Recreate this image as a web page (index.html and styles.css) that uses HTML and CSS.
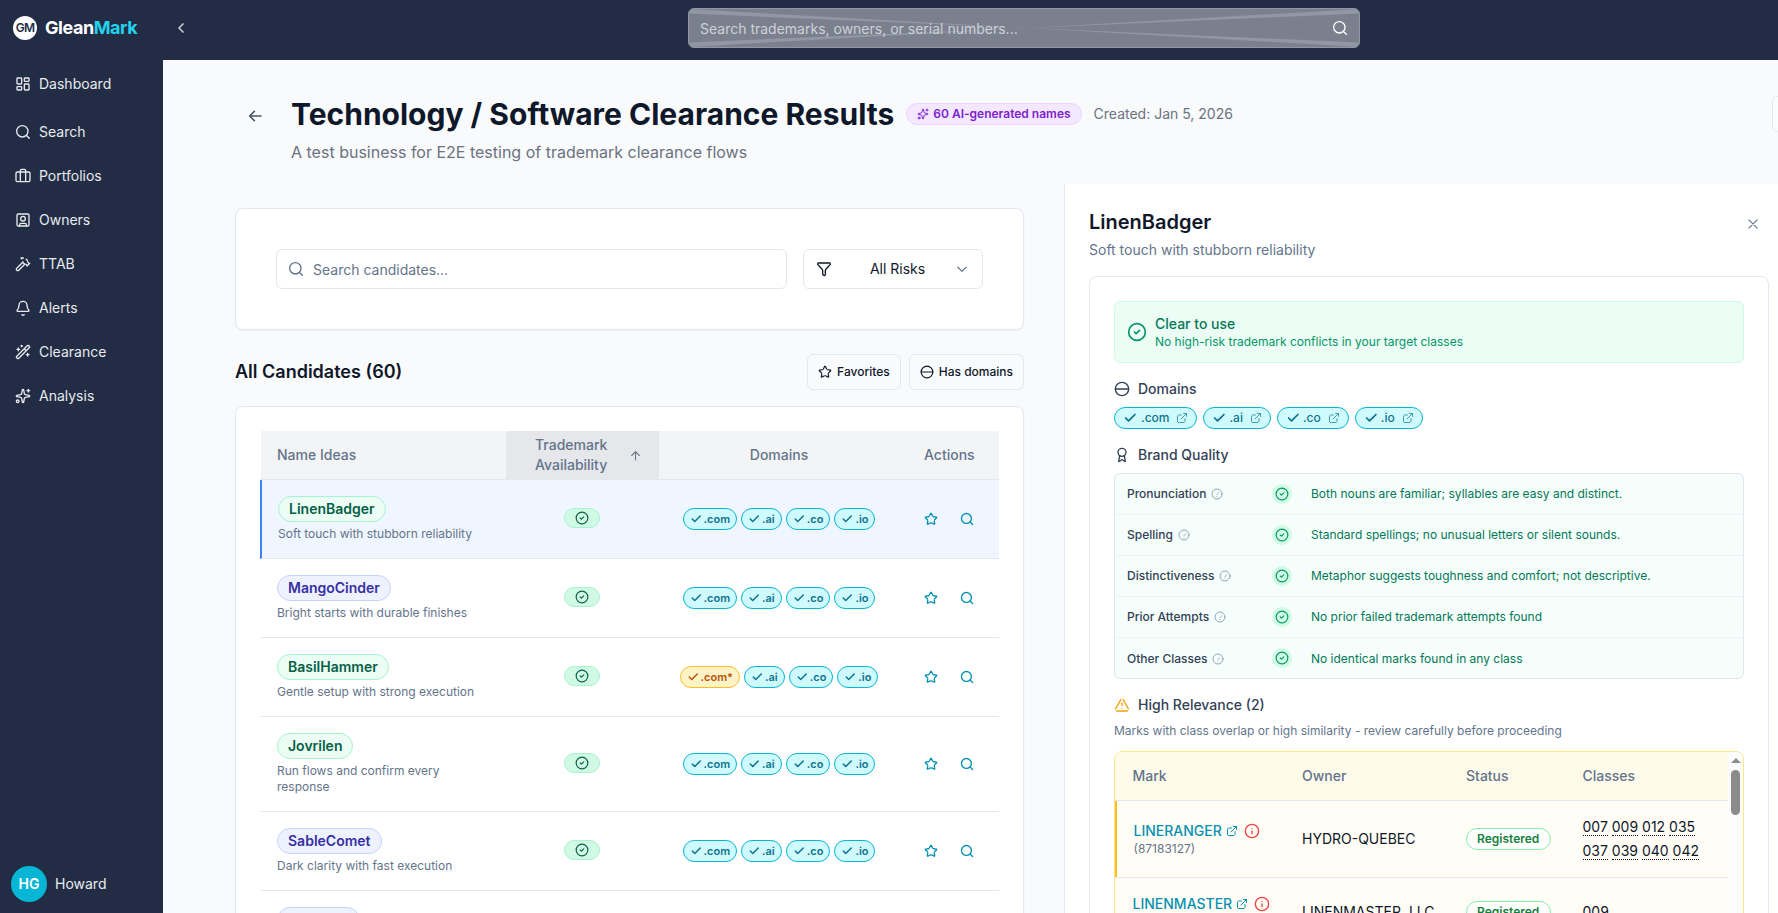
FILE: index.html
```html
<!DOCTYPE html>
<html lang="en">
<head>
<meta charset="utf-8">
<title>GleanMark - Clearance Results</title>
<link rel="stylesheet" href="styles.css">
</head>
<body>
<svg class="sprite" aria-hidden="true">
  <symbol id="check" viewBox="0 0 24 24"><path d="M20.500 6 9.500 17l-5-5"/></symbol>
  <symbol id="circle-check" viewBox="0 0 24 24"><circle cx="12" cy="12" r="10"/><path d="m9 12 2 2 4-4"/></symbol>
  <symbol id="search" viewBox="0 0 24 24"><circle cx="11" cy="11" r="8.5"/><path d="m21.5 21.5-4.3-4.3"/></symbol>
  <symbol id="star" viewBox="0 0 24 24"><path d="M11.525 2.295m.95 0l2.31 4.679m1.595 1.16l5.166.756m.294.904l-3.736 3.638m-.611 1.878l.882 5.14m-.771.56l-4.618-2.428m-1.973 0L6.396 21.01m-.77-.56l.881-5.139m-.611-1.879L2.16 9.795m.294-.906l5.165-.755m1.597-1.16l2.309-4.679"/></symbol>
  <symbol id="globe" viewBox="0 0 24 24"><circle cx="12" cy="12" r="10"/><path d="M2 12h20"/></symbol>
  <symbol id="help" viewBox="0 0 24 24"><circle cx="12" cy="12" r="10"/><path d="M14.92 10c0 2-3 3-3 3M12 17h.01"/></symbol>
  <symbol id="info" viewBox="0 0 24 24"><circle cx="12" cy="12" r="10"/><path d="M12 16v-4M12 8h.01"/></symbol>
  <symbol id="external" viewBox="0 0 24 24"><path d="M15 3h6v6M10 14 21 3M18 13v6M16 21H5M3 19V8M5 6h6"/></symbol>
  <symbol id="funnel" viewBox="0 0 24 24"><path d="M10.553 20.895l2 1M14 21v-7M14.517 12.659 21.74 4.67M21 3H3M2.258 4.67l7.225 7.989M10 14v6"/></symbol>
  <symbol id="sparkles" viewBox="0 0 24 24"><path d="M11.017 2.814a1 1 0 0 1 1.966 0l1.051 5.558a2 2 0 0 0 1.594 1.594l5.558 1.051a1 1 0 0 1 0 1.966l-5.558 1.051a2 2 0 0 0-1.594 1.594l-1.051 5.558a1 1 0 0 1-1.966 0l-1.051-5.558a2 2 0 0 0-1.594-1.594l-5.558-1.051a1 1 0 0 1 0-1.966l5.558-1.051a2 2 0 0 0 1.594-1.594zM20 2v4M22 4h-4"/><circle cx="4" cy="20" r="2"/></symbol>
  <symbol id="chevron-down" viewBox="0 0 24 24"><path d="m5 9 7 7 7-7"/></symbol>
</svg>

<header class="topbar">
  <div class="brand">
    <span class="brand-mark">GM</span>
    <span class="brand-name">Glean<b>Mark</b></span>
  </div>
  <svg class="icon collapse" viewBox="0 0 24 24"><path d="m15 18-6-6 6-6"/></svg>
  <div class="global-search">
    <svg class="global-search-bg" viewBox="0 0 672 40" preserveAspectRatio="none"><path d="M0 1 340 20 0 39V34.5L340 20 0 5.500zM672 1 340 20 672 39V34.500L340 20 672 5.500z"/></svg>
    <span>Search trademarks, owners, or serial numbers...</span>
    <svg class="icon"><use href="#search"/></svg>
  </div>
</header>

<div class="shell">
  <nav class="sidebar">
    <a class="nav-item first"><svg class="icon" viewBox="0 0 24 24"><rect x="3" y="3" width="7" height="9" rx="1"/><rect x="14" y="3" width="7" height="5" rx="1"/><rect x="14" y="12" width="7" height="9" rx="1"/><rect x="3" y="16" width="7" height="5" rx="1"/></svg>Dashboard</a>
    <a class="nav-item"><svg class="icon"><use href="#search"/></svg>Search</a>
    <a class="nav-item"><svg class="icon" viewBox="0 0 24 24"><path d="M16 20V4a2 2 0 0 0-2-2h-4a2 2 0 0 0-2 2v16"/><rect x="1.500" y="6" width="21" height="14.500" rx="2"/></svg>Portfolios</a>
    <a class="nav-item"><svg class="icon" viewBox="0 0 24 24"><rect x="3" y="3" width="18" height="18" rx="2"/><circle cx="12" cy="10" r="3.500"/><path d="M7 21v-2a2 2 0 0 1 2-2h6a2 2 0 0 1 2 2v2"/></svg>Owners</a>
    <a class="nav-item"><svg class="icon" viewBox="0 0 24 24"><path d="m15 12-9.373 9.373a1 1 0 0 1-3.001-3L12 9M18 15l4-4M21.500 11.500l-1.914-1.914M19 8.172v-.344M18.414 6.414l-1.657-1.657M12.516 3H9l1.243 1.243M12 8.485V10l2 2h1.172M16.586 12.586 18.500 14.500"/></svg>TTAB</a>
    <a class="nav-item"><svg class="icon" viewBox="0 0 24 24"><path d="M10.268 22a2 2 0 0 0 3.464 0M3.262 15.326A1 1 0 0 0 4 17h16a1 1 0 0 0 .74-1.673C19.410 13.956 18 12.499 18 8A6 6 0 0 0 6 8c0 4.499-1.411 5.956-2.738 7.326"/></svg>Alerts</a>
    <a class="nav-item"><svg class="icon" viewBox="0 0 24 24"><path d="m21.640 3.640-1.280-1.280a1.210 1.210 0 0 0-1.720 0L2.360 18.640a1.210 1.210 0 0 0 0 1.720l1.280 1.280a1.200 1.200 0 0 0 1.720 0L21.640 5.360a1.200 1.200 0 0 0 0-1.720M14 7l3 3M5 6v4M19 14v4M10 2v2M7 8H3M21 16h-4M11 3H9"/></svg>Clearance</a>
    <a class="nav-item"><svg class="icon"><use href="#sparkles"/></svg>Analysis</a>
    <div class="user"><span class="avatar">HG</span>Howard</div>
  </nav>

  <main class="main">
    <div class="page-head">
      <svg class="icon back" viewBox="0 0 24 24"><path d="m11 19-7-7 7-7M21 12H4"/></svg>
      <div class="page-titles">
        <div class="title-row">
          <h1>Technology / Software Clearance Results</h1>
          <span class="ai-badge"><svg class="icon"><use href="#sparkles"/></svg>60 AI-generated names</span>
          <span class="created">Created: Jan 5, 2026</span>
        </div>
        <p>A test business for E2E testing of trademark clearance flows</p>
      </div>
      <span class="edge-button"></span>
    </div>

    <div class="columns">
      <section class="list-col">
        <div class="card filters">
          <div class="field"><svg class="icon"><use href="#search"/></svg><span>Search candidates...</span></div>
          <div class="select"><svg class="icon"><use href="#funnel"/></svg><span>All Risks</span><svg class="icon chev"><use href="#chevron-down"/></svg></div>
        </div>
        <div class="list-head">
          <h2>All Candidates (60)</h2>
          <span class="btn"><svg class="icon"><use href="#star"/></svg>Favorites</span>
          <span class="btn"><svg class="icon"><use href="#globe"/></svg>Has domains</span>
        </div>
        <div class="card table-card">
          <div class="row thead">
            <div>Name Ideas</div>
            <div class="sorted"><span>Trademark<br>Availability</span><svg class="icon" viewBox="0 0 24 24"><path d="m5 12 7-7 7 7M12 20V5"/></svg></div>
            <div class="center">Domains</div>
            <div class="act-head">Actions</div>
          </div>
          <div class="row selected">
            <div class="idea"><span class="name green">LinenBadger</span><p>Soft touch with stubborn reliability</p></div>
            <div class="center"><span class="ok"><svg class="icon"><use href="#circle-check"/></svg></span></div>
            <div class="doms"><span class="dom"><svg class="icon"><use href="#check"/></svg>.com</span><span class="dom"><svg class="icon"><use href="#check"/></svg>.ai</span><span class="dom"><svg class="icon"><use href="#check"/></svg>.co</span><span class="dom"><svg class="icon"><use href="#check"/></svg>.io</span></div>
            <div class="acts"><svg class="icon"><use href="#star"/></svg><svg class="icon"><use href="#search"/></svg></div>
          </div>
          <div class="row">
            <div class="idea"><span class="name indigo">MangoCinder</span><p>Bright starts with durable finishes</p></div>
            <div class="center"><span class="ok"><svg class="icon"><use href="#circle-check"/></svg></span></div>
            <div class="doms"><span class="dom"><svg class="icon"><use href="#check"/></svg>.com</span><span class="dom"><svg class="icon"><use href="#check"/></svg>.ai</span><span class="dom"><svg class="icon"><use href="#check"/></svg>.co</span><span class="dom"><svg class="icon"><use href="#check"/></svg>.io</span></div>
            <div class="acts"><svg class="icon"><use href="#star"/></svg><svg class="icon"><use href="#search"/></svg></div>
          </div>
          <div class="row">
            <div class="idea"><span class="name green">BasilHammer</span><p>Gentle setup with strong execution</p></div>
            <div class="center"><span class="ok"><svg class="icon"><use href="#circle-check"/></svg></span></div>
            <div class="doms"><span class="dom amber"><svg class="icon"><use href="#check"/></svg>.com*</span><span class="dom"><svg class="icon"><use href="#check"/></svg>.ai</span><span class="dom"><svg class="icon"><use href="#check"/></svg>.co</span><span class="dom"><svg class="icon"><use href="#check"/></svg>.io</span></div>
            <div class="acts"><svg class="icon"><use href="#star"/></svg><svg class="icon"><use href="#search"/></svg></div>
          </div>
          <div class="row">
            <div class="idea"><span class="name green">Jovrilen</span><p>Run flows and confirm every response</p></div>
            <div class="center"><span class="ok"><svg class="icon"><use href="#circle-check"/></svg></span></div>
            <div class="doms"><span class="dom"><svg class="icon"><use href="#check"/></svg>.com</span><span class="dom"><svg class="icon"><use href="#check"/></svg>.ai</span><span class="dom"><svg class="icon"><use href="#check"/></svg>.co</span><span class="dom"><svg class="icon"><use href="#check"/></svg>.io</span></div>
            <div class="acts"><svg class="icon"><use href="#star"/></svg><svg class="icon"><use href="#search"/></svg></div>
          </div>
          <div class="row">
            <div class="idea"><span class="name indigo">SableComet</span><p>Dark clarity with fast execution</p></div>
            <div class="center"><span class="ok"><svg class="icon"><use href="#circle-check"/></svg></span></div>
            <div class="doms"><span class="dom"><svg class="icon"><use href="#check"/></svg>.com</span><span class="dom"><svg class="icon"><use href="#check"/></svg>.ai</span><span class="dom"><svg class="icon"><use href="#check"/></svg>.co</span><span class="dom"><svg class="icon"><use href="#check"/></svg>.io</span></div>
            <div class="acts"><svg class="icon"><use href="#star"/></svg><svg class="icon"><use href="#search"/></svg></div>
          </div>
          <div class="row">
            <div class="idea"><span class="name indigo blank"></span></div>
          </div>
        </div>
      </section>

      <aside class="detail">
        <div class="detail-head">
          <div><h3>LinenBadger</h3><p>Soft touch with stubborn reliability</p></div>
          <svg class="icon" viewBox="0 0 24 24"><path d="M19 5 5 19M5 5l14 14"/></svg>
        </div>
        <div class="detail-card">
          <div class="clear-box">
            <svg class="icon"><use href="#circle-check"/></svg>
            <div><strong>Clear to use</strong><p>No high-risk trademark conflicts in your target classes</p></div>
          </div>
          <h4><svg class="icon"><use href="#globe"/></svg>Domains</h4>
          <div class="links">
            <span class="link"><svg class="icon"><use href="#check"/></svg>.com<svg class="icon ext"><use href="#external"/></svg></span>
            <span class="link"><svg class="icon"><use href="#check"/></svg>.ai<svg class="icon ext"><use href="#external"/></svg></span>
            <span class="link"><svg class="icon"><use href="#check"/></svg>.co<svg class="icon ext"><use href="#external"/></svg></span>
            <span class="link"><svg class="icon"><use href="#check"/></svg>.io<svg class="icon ext"><use href="#external"/></svg></span>
          </div>
          <h4><svg class="icon" viewBox="0 0 24 24"><circle cx="12" cy="8" r="6"/><path d="m15.477 12.890 1.515 8.526m-.810.470l-3.580-2.687m-1.197 0l-3.586 2.686m-.810-.469l1.514-8.526"/></svg>Brand Quality</h4>
          <div class="quality">
            <div class="q-row"><span class="q-label">Pronunciation<svg class="icon"><use href="#help"/></svg></span><span class="disc"><svg class="icon"><use href="#circle-check"/></svg></span><span>Both nouns are familiar; syllables are easy and distinct.</span></div>
            <div class="q-row"><span class="q-label">Spelling<svg class="icon"><use href="#help"/></svg></span><span class="disc"><svg class="icon"><use href="#circle-check"/></svg></span><span>Standard spellings; no unusual letters or silent sounds.</span></div>
            <div class="q-row"><span class="q-label">Distinctiveness<svg class="icon"><use href="#help"/></svg></span><span class="disc"><svg class="icon"><use href="#circle-check"/></svg></span><span>Metaphor suggests toughness and comfort; not descriptive.</span></div>
            <div class="q-row"><span class="q-label">Prior Attempts<svg class="icon"><use href="#help"/></svg></span><span class="disc"><svg class="icon"><use href="#circle-check"/></svg></span><span>No prior failed trademark attempts found</span></div>
            <div class="q-row"><span class="q-label">Other Classes<svg class="icon"><use href="#help"/></svg></span><span class="disc"><svg class="icon"><use href="#circle-check"/></svg></span><span>No identical marks found in any class</span></div>
          </div>
          <h4 class="warn"><svg class="icon" viewBox="0 0 24 24"><path d="M21.730 18l-8-14M10.250 4l-8 14M4 21h16M12 9v4M12 17h.01"/></svg>High Relevance (2)</h4>
          <p class="note">Marks with class overlap or high similarity - review carefully before proceeding</p>
          <div class="marks">
            <div class="marks-body">
              <div class="m-row m-head"><span>Mark</span><span>Owner</span><span>Status</span><span>Classes</span></div>
              <div class="m-row m-first">
                <div><span class="mark-name">LINERANGER<svg class="icon"><use href="#external"/></svg><svg class="icon alert"><use href="#info"/></svg></span><p>(87183127)</p></div>
                <span>HYDRO-QUEBEC</span>
                <span><em class="reg">Registered</em></span>
                <span class="classes"><u>007</u> <u>009</u> <u>012</u> <u>035</u> <u>037</u> <u>039</u> <u>040</u> <u>042</u></span>
              </div>
              <div class="m-row m-second">
                <div><span class="mark-name">LINENMASTER<svg class="icon"><use href="#external"/></svg><svg class="icon alert"><use href="#info"/></svg></span></div>
                <span>LINENMASTER, LLC</span>
                <span><em class="reg">Registered</em></span>
                <span class="classes"><u>009</u></span>
              </div>
            </div>
            <div class="scroll"><i class="scroll-up"></i><i class="scroll-thumb"></i></div>
          </div>
        </div>
      </aside>
    </div>
  </main>
</div>
</body>
</html>
```
FILE: styles.css
```css
* { box-sizing: border-box; }
html, body { margin: 0; height: 100%; overflow: hidden; }
body { font-family: Inter, "Liberation Sans", sans-serif; font-size: 14px; line-height: 20px; color: #0f172a; background: #f9fafc; }
h1, h2, h3, h4, p { margin: 0; }
.sprite { position: absolute; width: 0; height: 0; }
.icon { width: 16px; height: 16px; flex: none; display: block; fill: none; stroke: currentColor; stroke-width: 2; stroke-linecap: round; stroke-linejoin: round; overflow: visible; }

/* Top bar */
.topbar { height: 60px; background: #222d45; display: flex; align-items: flex-start; }
.brand { width: 163px; padding: 16px 0 0 13px; display: flex; align-items: center; gap: 8px; }
.brand-mark { width: 24px; height: 24px; border-radius: 50%; background: #fff; color: #222d45; font-size: 12px; font-weight: 600; letter-spacing: -0.7px; display: flex; align-items: center; justify-content: center; }
.brand-name { font-size: 18px; line-height: 24px; font-weight: 700; letter-spacing: -0.45px; color: #fff; }
.brand-name b { color: #22d3ee; font-weight: 700; }
.collapse { color: #c3c8d1; margin: 20px 0 0 10px; stroke-width: 2.600; }
.global-search { position: relative; width: 672px; height: 40px; margin: 8px 0 0 499px; border: 1px solid #9297a5; border-radius: 6px; background: #7b808e; color: #cdd1d9; display: flex; align-items: center; justify-content: space-between; padding: 0 11px; overflow: hidden; }
.global-search-bg { position: absolute; inset: -1px; width: 672px; height: 40px; fill: #9297a5; }
.global-search span, .global-search .icon { position: relative; }
.global-search span { padding-top: 1px; }
.global-search .icon { color: #fff; }

/* Navigation */
.shell { display: flex; height: 853px; }
.sidebar { width: 163px; flex: none; background: #222d45; color: #e8eaee; display: flex; flex-direction: column; padding-top: 6px; }
.nav-item { height: 44px; padding-left: 15px; display: flex; align-items: center; gap: 8px; }
.nav-item.first { height: 36px; margin-bottom: 8px; }
.user { margin-top: auto; padding: 0 0 11px 11px; display: flex; align-items: center; gap: 8px; }
.avatar { width: 36px; height: 36px; border-radius: 50%; background: #06b6d4; color: #fff; font-weight: 600; display: flex; align-items: center; justify-content: center; }

/* Page header */
.main { flex: 1; min-width: 0; overflow: hidden; }
.page-head { height: 124px; padding: 36px 0 0 84px; display: flex; align-items: flex-start; color: #6b7280; }
.back { margin: 12px 28px 0 0; color: #4b5563; stroke-width: 2.400; }
.title-row { display: flex; align-items: center; gap: 12px; height: 36px; white-space: nowrap; }
h1 { font-size: 30px; line-height: 36px; font-weight: 700; color: #0f172a; }
.ai-badge { display: flex; align-items: center; gap: 4px; height: 22px; padding: 0 10px; border: 1px solid #e9d5ff; border-radius: 11px; background: #f3e8ff; color: #7e22ce; font-size: 12px; font-weight: 600; }
.ai-badge .icon { width: 12px; height: 12px; }
.page-titles p { margin-top: 8px; font-size: 16px; line-height: 24px; }
.edge-button { flex: none; width: 40px; height: 36px; margin-left: auto; margin-right: -34px; border: 1px solid #e2e8f0; border-radius: 6px; background: #fbfcfe; }

/* Candidate list */
.columns { display: flex; height: 729px; }
.list-col { width: 901px; flex: none; padding: 24px 40px 0 72px; }
.card { background: #fff; border: 1px solid #e2e8f0; border-radius: 8px; box-shadow: 0 1px 2px rgba(0,0,0,.05); }
.filters { height: 122px; padding: 40px; display: flex; gap: 16px; }
.field, .select { height: 40px; border: 1px solid #e2e8f0; border-radius: 6px; display: flex; align-items: center; }
.field { flex: 1; padding-left: 11px; gap: 9px; color: #64748b; }
.field span { padding-top: 1px; }
.select { width: 180px; padding: 0 13px 0 12px; justify-content: space-between; }
.select span { padding-left: 8px; }
.chev { color: #64748b; width: 14px; height: 14px; }
.list-head { margin: 24px 0 16px; height: 36px; display: flex; align-items: center; gap: 8px; }
h2 { flex: 1; font-size: 18px; line-height: 28px; font-weight: 600; }
.btn { height: 36px; padding: 0 10px; border: 1px solid #e2e8f0; border-radius: 6px; display: flex; align-items: center; gap: 5px; font-size: 12px; font-weight: 500; }
.btn .icon { width: 14px; height: 14px; }
.table-card { height: 700px; padding: 24px 24px 24px 25px; }
.row { display: grid; grid-template-columns: 245px 153px 240px 100px; align-items: center; border-bottom: 1px solid #e2e8f0; }
.thead { height: 49px; background: #f3f4f6; color: #64748b; font-weight: 500; }
.thead > div:first-child { padding-left: 16px; }
.thead .sorted { height: 48px; background: #e5e7eb; display: flex; align-items: center; gap: 22px; padding-left: 29px; }
.sorted .icon { width: 13px; height: 13px; }
.center { display: flex; justify-content: center; }
.act-head { padding-left: 25px; }
.idea { padding: 16px; align-self: start; }
.idea p { margin-top: 4px; font-size: 12px; line-height: 16px; color: #64748b; white-space: normal; }
.selected { background: #eff6ff; box-shadow: -1px 0 0 #3b82f6, inset 1px 0 0 #3b82f6; }
.selected .idea { padding-left: 17px; padding-right: 0; }
.name { display: inline-flex; align-items: center; height: 26px; padding: 0 10px; border-radius: 13px; border: 1px solid; font-weight: 600; vertical-align: top; }
.green { color: #065f46; background: #ecfdf5; border-color: #a7f3d0; }
.indigo { color: #3730a3; background: #eef2ff; border-color: #c7d2fe; }
.blank { width: 83px; }
.ok { width: 36px; height: 20px; margin: 0 1px 2px 0; border-radius: 10px; border: 1px solid #a7f3d0; background: #d1fae5; color: #065f46; display: flex; align-items: center; justify-content: center; }
.ok .icon { width: 14px; height: 14px; }
.doms { display: flex; justify-content: center; gap: 4px; }
.dom { display: flex; align-items: center; gap: 2px; height: 22px; padding: 0 6px; border: 1px solid #06b6d4; border-radius: 11px; background: #cffafe; color: #0e7490; font-size: 11px; font-weight: 600; }
.dom .icon { width: 12px; height: 12px; stroke-width: 3; }
.amber { background: #fef3c7; border-color: #fbbf24; color: #b45309; }
.acts { display: flex; gap: 22px; padding-left: 25px; color: #0891b2; }
.acts .icon { width: 14px; height: 14px; stroke-width: 2.300; }

/* Detail panel */
.detail { width: 714px; flex: none; background: #fff; border-left: 1px solid #e2e8f0; padding: 24px 9px 0 24px; height: 729px; }
.detail-head { display: flex; justify-content: space-between; height: 68px; padding-right: 9px; }
.detail-head .icon { margin-top: 9px; width: 14px; height: 14px; color: #64748b; }
h3 { font-size: 20px; line-height: 28px; font-weight: 600; }
.detail-head p { margin-top: 4px; color: #64748b; }
.detail-card { height: 760px; border: 1px solid #e2e8f0; border-radius: 8px; padding: 24px; }
.clear-box { height: 62px; border: 1px solid #d1fae5; border-radius: 6px; background: #ecfdf5; display: flex; align-items: center; gap: 8px; padding: 0 12px; color: #059669; }
.clear-box .icon { width: 20px; height: 20px; }
.clear-box strong { display: block; font-weight: 500; color: #047857; }
.clear-box p { font-size: 12px; line-height: 16px; }
h4 { margin-top: 16px; display: flex; align-items: center; gap: 8px; font-size: 14px; line-height: 20px; font-weight: 500; color: #334155; }
.links { display: flex; gap: 6px; margin-top: 8px; }
.link { display: flex; align-items: center; height: 22px; padding: 0 8px; border: 1px solid #06b6d4; border-radius: 11px; background: #cffafe; color: #0e7490; font-size: 12px; font-weight: 500; }
.link .icon { width: 14px; height: 14px; margin-right: 3px; stroke-width: 3; }
.link:first-child .icon:first-child { margin-right: 4px; }
.link .ext { width: 12px; height: 12px; margin: 0 0 0 7px; stroke-width: 2; opacity: .7; }
.quality { margin-top: 8px; height: 206px; border: 1px solid #e2e8f0; border-radius: 6px; background: #f5fefb; font-size: 12px; color: #047857; }
.q-row { height: 41px; padding-left: 12px; display: grid; grid-template-columns: 145px 39px 1fr; align-items: center; border-bottom: 1px solid #eef2f6; }
.q-row:last-child { border-bottom: 0; }
.q-label { display: flex; align-items: center; gap: 5px; font-weight: 500; color: #334155; }
.q-label .icon { width: 12px; height: 12px; color: #94a3b8; }
.disc { width: 20px; height: 20px; margin-bottom: 1px; border-radius: 50%; background: #d1fae5; color: #059669; display: flex; align-items: center; justify-content: center; }
.disc .icon { width: 14px; height: 14px; }
.warn .icon { color: #f59e0b; }
.note { margin-top: 8px; font-size: 12px; line-height: 16px; color: #64748b; }
.marks { margin-top: 12px; height: 300px; border: 1px solid #fde68a; border-radius: 8px; display: flex; overflow: hidden; }
.marks-body { flex: 1; background: #fffdf5; }
.m-row { display: grid; grid-template-columns: 169.500px 164px 116.500px 1fr; align-items: center; border-bottom: 1px solid #e2e8f0; padding-left: 17.500px; }
.m-head { height: 49px; background: #fffbeb; color: #64748b; font-weight: 500; }
.m-first { height: 77px; box-shadow: inset 2px 0 0 #fbbf24; }
.m-first > div { padding-left: 1px; }
.m-second { height: 69px; }
.m-second > div { align-self: start; padding-top: 16px; }
.mark-name { display: flex; align-items: center; font-weight: 500; color: #0891b2; line-height: 20px; }
.mark-name .icon { width: 12px; height: 12px; margin-left: 4px; }
.mark-name .alert { width: 16px; height: 16px; margin-left: 6px; color: #ef4444; }
.m-row p { font-size: 12px; line-height: 16px; color: #64748b; }
.reg { display: inline-flex; align-items: center; height: 22px; padding: 0 11px 0 10px; border: 1px solid #86efac; border-radius: 11px; background: #fff; color: #15803d; font-size: 12px; font-style: normal; font-weight: 600; vertical-align: middle; }
.classes { line-height: 24px; width: 124px; }
.classes u { text-decoration: none; border-bottom: 1px dotted #0f172a; line-height: 16px; display: inline-block; }
.scroll { width: 15px; flex: none; background: #fcfcfc; display: flex; flex-direction: column; align-items: center; padding-top: 6px; }
.scroll-up { border: 5px solid transparent; border-top: 0; border-bottom: 5px solid #8b8b8b; }
.scroll-thumb { width: 9px; height: 45px; margin-top: 7px; border-radius: 5px; background: #8b8b8b; }
```
